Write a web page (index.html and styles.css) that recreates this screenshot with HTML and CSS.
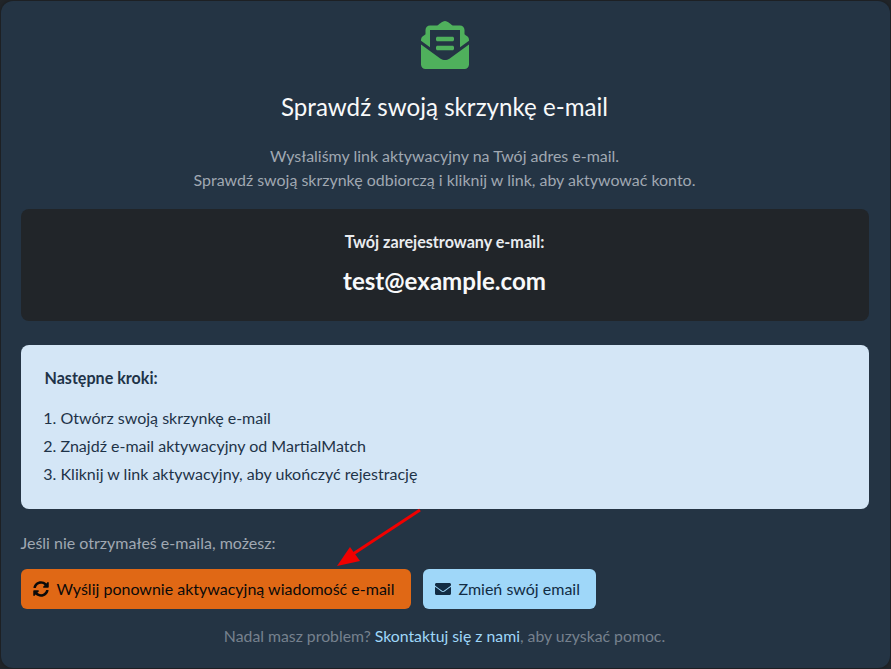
FILE: index.html
```html
<!DOCTYPE html>
<html lang="pl">
<head>
<meta charset="utf-8">
<title>Sprawdź swoją skrzynkę e-mail</title>
<link rel="stylesheet" href="styles.css">
</head>
<body>
<main class="card">
  <div class="hero-icon">
    <svg viewBox="0 0 512 512" width="48" height="48" fill="#4fb05c"><path d="M176 216h160c8.840 0 16-7.160 16-16v-16c0-8.840-7.160-16-16-16H176c-8.840 0-16 7.160-16 16v16c0 8.840 7.160 16 16 16zm-16 80c0 8.840 7.160 16 16 16h160c8.840 0 16-7.160 16-16v-16c0-8.840-7.160-16-16-16H176c-8.840 0-16 7.160-16 16v16zm96 121.130c-16.420 0-32.840-5.060-46.860-15.190L0 250.860V464c0 26.510 21.490 48 48 48h416c26.510 0 48-21.490 48-48V250.860L302.860 401.940c-14.020 10.120-30.440 15.190-46.860 15.190zm237.610-254.180c-8.850-6.940-17.240-13.470-29.610-22.810V96c0-26.510-21.490-48-48-48h-77.550c-3.040-2.200-5.870-4.260-9.040-6.560C312.600 29.170 279.200-.35 256 0c-23.200-.35-56.590 29.170-73.410 41.440-3.170 2.300-6 4.370-9.040 6.560H96c-26.510 0-48 21.490-48 48v44.140c-12.370 9.330-20.760 15.870-29.610 22.810A47.995 47.995 0 0 0 0 200.720v10.650l96 69.350V96h320v184.720l96-69.350v-10.650c0-14.740-6.780-28.670-18.390-37.770z"/></svg>
  </div>
  <h1 class="title">Sprawdź swoją skrzynkę e-mail</h1>
  <p class="lead">Wysłaliśmy link aktywacyjny na Twój adres e-mail.<br>Sprawdź swoją skrzynkę odbiorczą i kliknij w link, aby aktywować konto.</p>
  <section class="email-box">
    <p class="email-label">Twój zarejestrowany e-mail:</p>
    <p class="email-value">test@example.com</p>
  </section>
  <section class="steps">
    <p class="steps-title">Następne kroki:</p>
    <ol class="steps-list">
      <li>Otwórz swoją skrzynkę e-mail</li>
      <li>Znajdź e-mail aktywacyjny od MartialMatch</li>
      <li>Kliknij w link aktywacyjny, aby ukończyć rejestrację</li>
    </ol>
  </section>
  <p class="hint">Jeśli nie otrzymałeś e-maila, możesz:</p>
  <div class="actions">
    <button class="btn btn-orange" type="button">
      <svg class="btn-icon" viewBox="0 0 512 512" fill="currentColor"><path d="M370.720 133.280C339.458 104.008 298.888 87.962 255.848 88c-77.458.068-144.328 53.178-162.791 126.850-1.344 5.363-6.122 9.150-11.651 9.150H24.103c-7.498 0-13.194-6.807-11.807-14.176C33.933 94.924 134.813 8 256 8c66.448 0 126.791 26.136 171.315 68.685L463.030 40.970C478.149 25.851 504 36.559 504 57.941V192c0 13.255-10.745 24-24 24H345.941c-21.382 0-32.090-25.851-16.971-40.971l41.750-41.749zM32 296h134.059c21.382 0 32.090 25.851 16.971 40.971l-41.750 41.750c31.262 29.273 71.835 45.319 114.876 45.280 77.418-.070 144.315-53.144 162.787-126.849 1.344-5.363 6.122-9.150 11.651-9.150h57.304c7.498 0 13.194 6.807 11.807 14.176C478.067 417.076 377.187 504 256 504c-66.448 0-126.791-26.136-171.315-68.685L48.970 471.030C33.851 486.149 8 475.441 8 454.059V320c0-13.255 10.745-24 24-24z"/></svg>
      Wyślij ponownie aktywacyjną wiadomość e-mail
    </button>
    <button class="btn btn-blue" type="button">
      <svg class="btn-icon" viewBox="0 0 512 512" fill="currentColor"><path d="M502.300 190.800c3.900-3.100 9.700-.2 9.700 4.700V400c0 26.500-21.500 48-48 48H48c-26.500 0-48-21.500-48-48V195.600c0-5 5.700-7.800 9.700-4.700 22.400 17.400 52.100 39.500 154.100 113.600 21.100 15.400 56.700 47.800 92.200 47.600 35.700.3 72-32.800 92.300-47.600 102-74.100 131.600-96.300 154-113.700zM256 320c23.200.4 56.600-29.200 73.400-41.400 132.700-96.300 142.800-104.700 173.400-128.700 5.800-4.500 9.200-11.500 9.200-18.900v-19c0-26.500-21.500-48-48-48H48C21.500 64 0 85.500 0 112v19c0 7.400 3.400 14.300 9.200 18.900 30.600 23.900 40.700 32.400 173.400 128.700 16.800 12.200 50.200 41.800 73.400 41.400z"/></svg>
      Zmień swój email
    </button>
  </div>
  <p class="help">Nadal masz problem? <a class="help-link" href="#">Skontaktuj się z nami</a>, aby uzyskać pomoc.</p>
  <svg class="arrow" width="100" height="70" viewBox="0 0 100 70"><line x1="84" y1="2" x2="17" y2="46" stroke="#f00000" stroke-width="3"/><polygon points="1,58 14,39 24,53" fill="#f00000"/></svg>
</main>
</body>
</html>
```
FILE: styles.css
```css
* { box-sizing: border-box; }
html, body { margin: 0; height: 100%; }
body {
  background: #212529;
  font-family: "Lato", sans-serif;
  color: #f8f9fa;
  overflow: hidden;
}
.card {
  position: relative;
  margin: 1px 0 0 .5px;
  width: 889px;
  height: 667px;
  padding: 20px 21px 0 20px;
  background: #243444;
  border-radius: 12px;
  text-align: center;
  box-shadow: 0 0 4px rgba(0,0,0,.3);
}
.hero-icon { height: 48px; margin-bottom: 23px; line-height: 0; }
.title { margin: 0 0 23px; font-size: 24.15px; line-height: 29px; font-weight: 400; color: #f8f9fa; }
.lead { margin: 0 0 17px; font-size: 15.96px; line-height: 24px; color: #a0a8b2; }
.email-box {
  height: 112px;
  padding-top: 23px;
  background: #212529;
  border-radius: 8px;
}
.email-label { margin: 0 0 15px; font-size: 16.15px; line-height: 19px; font-weight: 700; color: #e9ecef; }
.email-value { margin: 0; font-size: 24.1px; line-height: 29px; font-weight: 700; color: #f8f9fa; }
.steps {
  height: 164px;
  margin-top: 24px;
  padding: 23px 24px;
  background: #d4e6f6;
  border-radius: 8px;
  text-align: left;
  color: #1e3348;
}
.steps-title { margin: 0 0 17px; font-size: 16.1px; line-height: 19px; font-weight: 700; }
.steps-list { margin: 0; padding: 0 0 0 16px; font-size: 16.03px; line-height: 28px; }
.hint { margin: 22px 0 0; font-size: 16px; line-height: 24px; text-align: left; color: #a0a8b2; }
.actions { display: flex; gap: 12px; margin-top: 14px; }
.btn {
  display: flex;
  align-items: center;
  height: 40px;
  padding: 0 16px 0 12px;
  border: 0;
  border-radius: 6px;
  font: 400 16px/24px "Lato", sans-serif;
  color: #0a0a0a;
  white-space: nowrap;
}
.btn-icon { width: 16px; height: 16px; margin-right: 8px; flex: none; }
.btn-orange { background: #e06815; width: 390px; }
.btn-blue { background: #9fd7f9; color: #122c44; width: 173px; }
.help { margin: 15px 0 0; font-size: 15.8px; line-height: 24px; color: #76818e; }
.help-link { color: #9fd7f9; text-decoration: none; }
.arrow { position: absolute; left: 335.5px; top: 507px; }
```
